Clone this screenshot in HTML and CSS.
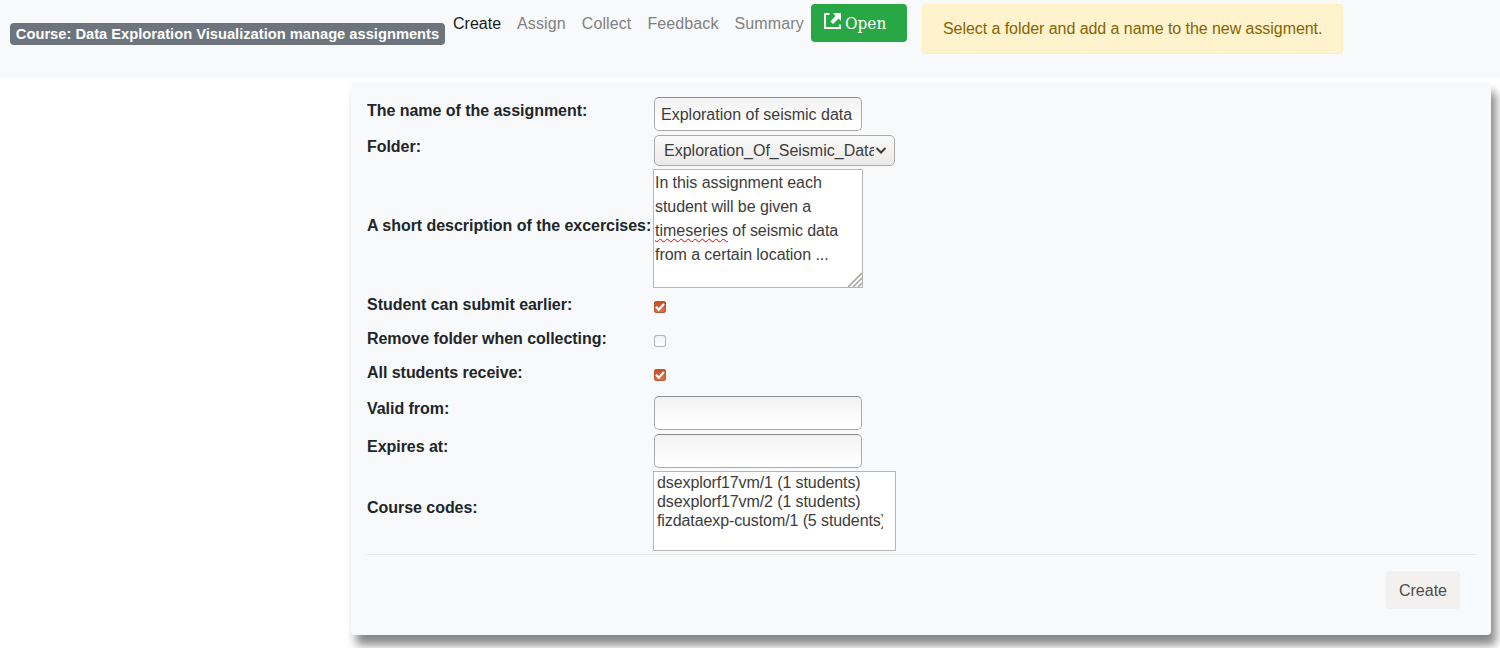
FILE: index.html
```
<!DOCTYPE html>
<html lang="en">
<head>
<meta charset="utf-8">
<title>Manage assignments</title>
<link rel="stylesheet" href="styles.css">
</head>
<body>
<nav class="navbar">
  <span class="badge">Course: Data Exploration Visualization manage assignments</span>
  <div class="tabs">
    <a class="tab active">Create</a>
    <a class="tab">Assign</a>
    <a class="tab">Collect</a>
    <a class="tab">Feedback</a>
    <a class="tab">Summary</a>
  </div>
  <a class="open-button">
    <svg class="open-icon" width="17" height="17" viewBox="0 0 17 17"><path d="M5.5 1H1V15H16V11.5" fill="none" stroke="#fff" stroke-width="2"/><path d="M9 0H17V8L14.5 5.5L9 11L6.5 8.5L11.5 3Z" fill="#fff"/></svg>
    <span>Open</span>
  </a>
  <div class="alert">Select a folder and add a name to the new assigment.</div>
</nav>
<main class="card">
  <div class="form">
    <label>The name of the assignment:</label>
    <div class="cell"><input class="text-input" type="text" value="Exploration of seismic data"></div>
    <label>Folder:</label>
    <div class="cell"><div class="dropdown"><span class="dropdown-value">Exploration_Of_Seismic_Data</span><svg class="chevron" width="12" height="8" viewBox="0 0 12 8"><path d="M1.5 1L6 5.5L10.5 1" fill="none" stroke="#3c3c3c" stroke-width="2"/></svg></div></div>
    <label>A short description of the excercises:</label>
    <div class="cell"><div class="textarea">In this assignment each<br>student will be given a<br><span class="misspelled">timeseries</span> of seismic data<br>from a certain location ...<svg class="grip" width="15" height="15" viewBox="0 0 15 15"><path d="M1 15L15 1M6 15L15 6M11 15L15 11" stroke="#a9a9a4" stroke-width="1.6"/></svg></div></div>
    <label>Student can submit earlier:</label>
    <div class="cell"><span class="check checked"><svg width="12" height="12" viewBox="0 0 12 12"><path d="M2 5.8L4.8 8.8L10 3" fill="none" stroke="#fff" stroke-width="2.1"/></svg></span></div>
    <label>Remove folder when collecting:</label>
    <div class="cell"><span class="check"></span></div>
    <label>All students receive:</label>
    <div class="cell"><span class="check checked"><svg width="12" height="12" viewBox="0 0 12 12"><path d="M2 5.8L4.8 8.8L10 3" fill="none" stroke="#fff" stroke-width="2.1"/></svg></span></div>
    <label>Valid from:</label>
    <div class="cell low"><input class="text-input" type="text"></div>
    <label>Expires at:</label>
    <div class="cell low"><input class="text-input" type="text"></div>
    <label>Course codes:</label>
    <div class="cell"><div class="listbox">
      <div class="option">dsexplorf17vm/1 (1 students)</div>
      <div class="option">dsexplorf17vm/2 (1 students)</div>
      <div class="option">fizdataexp-custom/1 (5 students)</div>
    </div></div>
  </div>
  <div class="footer"><button class="create">Create</button></div>
</main>
</body>
</html>
```

FILE: styles.css
```
* { box-sizing: border-box; }
body {
  margin: 0;
  height: 648px;
  overflow: hidden;
  background: #fff;
  color: #212529;
  font: 16px/24px "Liberation Sans", Arial, sans-serif;
}
.navbar {
  display: flex;
  align-items: flex-start;
  height: 78px;
  padding: 4px 10px;
  background: #f8f9fb;
}
.badge {
  width: 435px;
  height: 22px;
  margin-top: 19px;
  border-radius: 4px;
  background: #6c757d;
  color: #fff;
  font-size: 14.7px;
  font-weight: bold;
  line-height: 22px;
  text-align: center;
  white-space: nowrap;
}
.tabs { display: flex; width: 366px; }
.tab { padding: 8px 8px; line-height: 24px; color: #808182; letter-spacing: 0.11px; }
.tab.active { color: #17191a; letter-spacing: 0; }
.open-button {
  display: flex;
  width: 96px;
  height: 38px;
  padding: 7px 13px;
  gap: 4px;
  border-radius: 4px;
  background: #28a745;
  color: #fff;
  font-family: "DejaVu Serif Condensed", "DejaVu Serif", serif;
  font-size: 17px;
}
.open-icon { flex: none; margin-top: 2px; }
.alert {
  width: 421px;
  height: 50px;
  margin-left: 15px;
  padding: 12px 20px;
  border: 1px solid #ffeeba;
  border-radius: 4px;
  background: #fff3cd;
  color: #856404;
  letter-spacing: -0.06px;
  white-space: nowrap;
}
.card {
  width: 1140px;
  height: 553px;
  margin: 4px 0 0 351px;
  padding: 13px 15px 0 16px;
  border-radius: 4px;
  background: #f8f9fb;
  box-shadow: 5px 10px 10px #888;
}
.form {
  display: grid;
  grid-template-columns: 286px 1fr;
  grid-template-rows: 38px 34px 124px 34px 34px 34px 38px 38px 84px;
  height: 460px;
  border-bottom: 1px solid #e7e8e9;
}
label { align-self: center; padding-bottom: 6px; font-weight: bold; letter-spacing: -0.04px; white-space: nowrap; }
.cell { display: flex; align-items: center; }
.cell.low { padding-top: 2px; }
.text-input {
  width: 208px;
  height: 34px;
  margin-left: 1px;
  padding: 2px 6px 0;
  border: 1px solid #a9a9a9;
  border-top-color: #8c8c8c;
  border-radius: 5px;
  outline: 0;
  background: linear-gradient(#f2f2f2, #fff 90%);
  color: #3c3c3c;
  font: inherit;
}
.dropdown {
  display: flex;
  align-items: center;
  width: 241px;
  height: 31px;
  margin: 1px 0 0 1px;
  padding-left: 9px;
  border: 1px solid #aaa;
  border-radius: 5px;
  background: linear-gradient(#fbfbfb, #ebe9e7);
  color: #3c3c3c;
}
.dropdown-value { width: 210px; overflow: hidden; white-space: nowrap; }
.chevron { margin-left: 1px; }
.textarea {
  position: relative;
  width: 210px;
  height: 119px;
  margin-bottom: 1px;
  padding: 1px;
  border: 1px solid #b6b6b3;
  background: #fff;
  color: #3c3c3c;
  letter-spacing: -0.06px;
  line-height: 24px;
}
.misspelled { text-decoration: underline wavy #e00 1px; text-underline-offset: 2px; text-decoration-skip-ink: none; letter-spacing: 0; }
.grip { position: absolute; right: 0; bottom: 0; }
.check {
  display: flex;
  width: 12px;
  height: 12px;
  margin: 0 0 2px 1px;
  border-radius: 3px;
  background: linear-gradient(#f1f1f1, #fff);
  box-shadow: inset 0 0 0 1px #b5b5b5;
}
.checked { background: linear-gradient(#c9481b, #df7850); box-shadow: inset 0 0 0 1px #b45a38; }
.listbox {
  width: 243px;
  height: 80px;
  padding: 1px 12px 0 3px;
  border: 1px solid #b6b6b3;
  background: #fff;
  color: #3c3c3c;
  letter-spacing: -0.1px;
}
.option { height: 19px; overflow: hidden; line-height: 19px; white-space: nowrap; }
.footer { display: flex; justify-content: flex-end; padding: 16px 16px 0 0; }
.create {
  width: 74px;
  height: 38px;
  padding: 2px 0 0;
  border: 0;
  border-radius: 4px;
  background: #f2f1f0;
  color: #4c4c4c;
  font: inherit;
}
```
